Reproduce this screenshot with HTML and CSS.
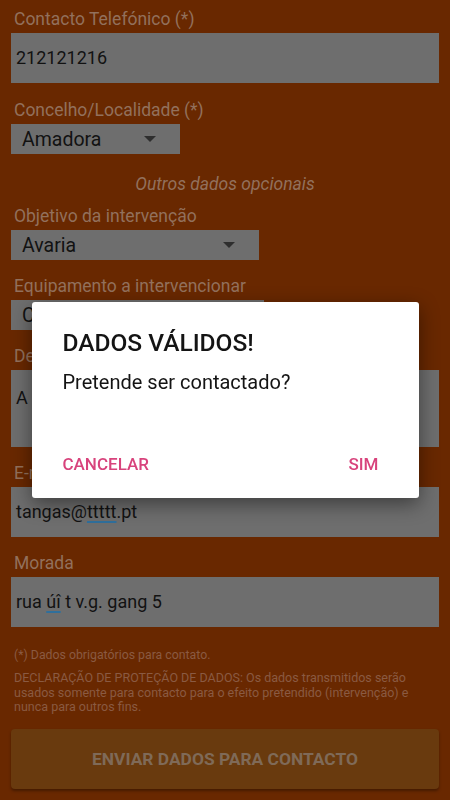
FILE: index.html
```html
<!DOCTYPE html>
<html lang="pt">
<head>
    <meta charset="UTF-8">
    <meta name="viewport" content="width=device-width, initial-scale=1.0">
    <link rel="stylesheet" href="styles.css">
</head>
<body>
    <div class="form">
        <div class="field first">
            <label>Contacto Telefónico (*)</label>
            <div class="input">212121216</div>
        </div>
        <div class="field second">
            <label>Concelho/Localidade (*)</label>
            <div class="select small">Amadora <span class="arrow"></span></div>
        </div>

        <p class="optional">Outros dados opcionais</p>

        <div class="field tight">
            <label>Objetivo da intervenção</label>
            <div class="select medium">Avaria <span class="arrow"></span></div>
        </div>
        <div class="field">
            <label>Equipamento a intervencionar</label>
            <div class="select wide">Caldeira <span class="arrow"></span></div>
        </div>
        <div class="field">
            <label>Descrição</label>
            <div class="input area">A caldeira não acende</div>
        </div>
        <div class="field">
            <label>E-mail</label>
            <div class="input">tangas@<span class="spell">ttttt</span>.pt</div>
        </div>
        <div class="field">
            <label>Morada</label>
            <div class="input">rua <span class="spell">úî</span> t v.g. gang 5</div>
        </div>

        <p class="note">(*) Dados obrigatórios para contato.</p>
        <p class="declaration">DECLARAÇÃO DE PROTEÇÃO DE DADOS: Os dados transmitidos serão usados somente para contacto para o efeito pretendido (intervenção) e nunca para outros fins.</p>

        <button class="send">ENVIAR DADOS PARA CONTACTO</button>
    </div>

    <div class="overlay">
        <div class="dialog">
            <h2>DADOS VÁLIDOS!</h2>
            <p>Pretende ser contactado?</p>
            <div class="actions">
                <span class="action">CANCELAR</span>
                <span class="action">SIM</span>
            </div>
        </div>
    </div>
</body>
</html>
```

FILE: styles.css
```css
body {
    margin: 0;
    background-color: #692800;
    font-family: Roboto, "Noto Sans", sans-serif;
    height: 800px;
    overflow: hidden;
}

.form {
    padding: 9px 11px 0 11px;
}

.field {
    margin-top: 16px;
}

.field.first {
    margin-top: 0;
}

.field.second {
    margin-top: 17px;
}

.field.tight {
    margin-top: 12px;
}

.field label {
    display: block;
    height: 20px;
    line-height: 20px;
    margin-bottom: 4px;
    padding-left: 3px;
    font-size: 17.5px;
    color: #92705c;
    white-space: nowrap;
}

.input {
    height: 50px;
    line-height: 50px;
    padding-left: 5px;
    background-color: #6e6e6e;
    font-size: 18px;
    color: #121212;
    white-space: nowrap;
    overflow: hidden;
}

.input.area {
    height: 77px;
    line-height: 56px;
}

.spell {
    text-decoration: underline;
    text-decoration-color: #2f6f9c;
    text-decoration-thickness: 2px;
    text-underline-offset: 3px;
}

.select {
    display: flex;
    align-items: center;
    justify-content: space-between;
    height: 30px;
    padding: 0 24px 0 11px;
    box-sizing: border-box;
    background-color: #6e6e6e;
    font-size: 19.5px;
    color: #121212;
}

.select.small {
    width: 169px;
}

.select.medium {
    width: 248px;
}

.select.wide {
    width: 253px;
}

.arrow {
    width: 0;
    height: 0;
    border-left: 6px solid transparent;
    border-right: 6px solid transparent;
    border-top: 6px solid #2e2e2e;
}

.optional {
    margin: 20px 0 12px 0;
    height: 20px;
    line-height: 20px;
    text-align: center;
    font-style: italic;
    font-size: 17.5px;
    color: #92705c;
}

.note {
    margin: 21px 0 0 0;
    padding-left: 3px;
    font-size: 12.3px;
    line-height: 15px;
    color: #8a5a42;
}

.declaration {
    margin: 8px 0 0 0;
    padding: 0 20px 0 3px;
    font-size: 12.5px;
    line-height: 14.5px;
    color: #8a5a42;
}

.send {
    display: block;
    width: 100%;
    height: 60px;
    margin-top: 14px;
    border: none;
    border-radius: 4px;
    background-color: #693a0e;
    box-shadow: 0 2px 3px rgba(0, 0, 0, 0.35);
    font-family: Roboto, sans-serif;
    font-weight: bold;
    font-size: 17.4px;
    color: #7f6a58;
}

.overlay {
    position: fixed;
    top: 0;
    left: 0;
    width: 100%;
    height: 100%;
    display: flex;
    align-items: center;
    justify-content: center;
}

.dialog {
    width: 387px;
    height: 196px;
    box-sizing: border-box;
    padding: 26px 40px 0 31px;
    background-color: #fff;
    border-radius: 3px;
    box-shadow: 0 6px 20px rgba(0, 0, 0, 0.45);
}

.dialog h2 {
    margin: 0;
    height: 30px;
    line-height: 30px;
    font-size: 24.5px;
    font-weight: 500;
    color: #141414;
}

.dialog p {
    margin: 12px 0 0 0;
    height: 24px;
    line-height: 24px;
    font-size: 20px;
    color: #141414;
}

.actions {
    display: flex;
    justify-content: space-between;
    margin-top: 60px;
}

.action {
    font-size: 17px;
    font-weight: 500;
    color: #d8437c;
    line-height: 20px;
}
```
